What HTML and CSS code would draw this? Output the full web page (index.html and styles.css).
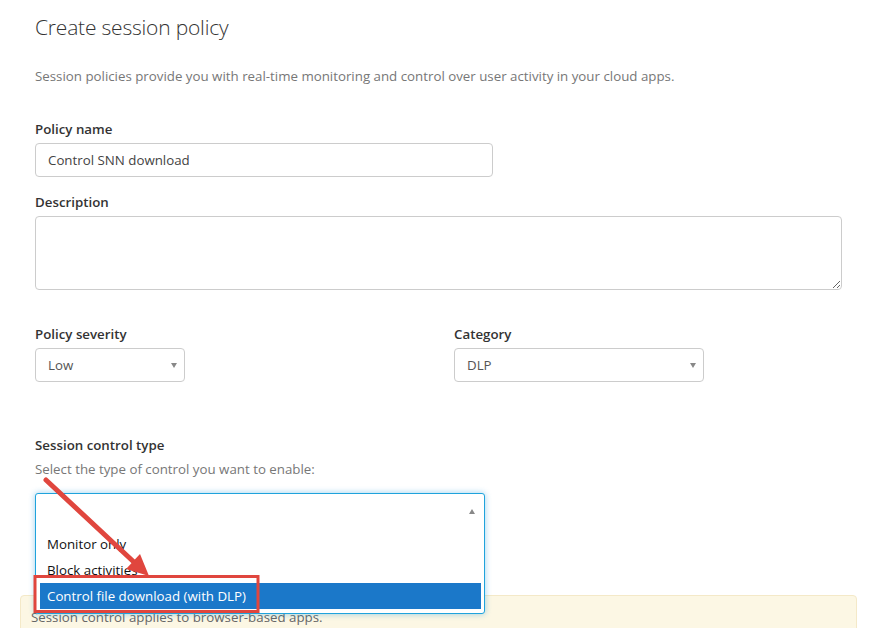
FILE: index.html
```html
<!DOCTYPE html>
<html>
<head>
<meta charset="utf-8">
<link rel="stylesheet" href="styles.css">
</head>
<body>
<div class="page">
  <div class="form">
    <h1 class="title">Create session policy</h1>
    <p class="intro">Session policies provide you with real-time monitoring and control over user activity in your cloud apps.</p>

    <div class="group">
      <label class="label">Policy name</label>
      <div class="input">Control SNN download</div>
    </div>

    <div class="group">
      <label class="label">Description</label>
      <textarea class="textarea"></textarea>
    </div>

    <div class="row">
      <div class="col">
        <label class="label">Policy severity</label>
        <div class="select sel-sev"><span>Low</span><i class="caret"></i></div>
      </div>
      <div class="col">
        <label class="label">Category</label>
        <div class="select sel-cat"><span>DLP</span><i class="caret"></i></div>
      </div>
    </div>

    <div class="group control">
      <label class="label">Session control type</label>
      <p class="hint">Select the type of control you want to enable:</p>
      <div class="combo">
        <div class="combo-open">
          <div class="combo-head"><i class="caret-up"></i></div>
          <ul class="options">
            <li>Monitor only</li>
            <li>Block activities</li>
            <li class="active">Control file download (with DLP)</li>
          </ul>
        </div>
      </div>
    </div>
  </div>

  <div class="alert">Session control applies to browser-based apps.</div>
</div>

<svg class="annot" width="870" height="628" viewBox="0 0 870 628">
  <line x1="46" y1="480" x2="136" y2="564" stroke="#e0463e" stroke-width="5" stroke-linecap="round"/>
  <polygon points="149,576 126,569 140,554" fill="#e0463e"/>
  <rect x="35" y="576.5" width="223" height="35" fill="none" stroke="#e0463e" stroke-width="3"/>
</svg>
</body>
</html>
```

FILE: styles.css
```css
* { box-sizing: border-box; }
html, body { margin: 0; padding: 0; background: #fff; }
body {
  font-family: "Open Sans", "Noto Sans", "Liberation Sans", sans-serif;
  font-size: 13.3px;
  color: #333;
  overflow: hidden;
  width: 870px;
  height: 628px;
  position: relative;
}
.page { padding: 0 13px 0 20px; }
.form { padding: 0 15px; }
.title {
  margin: 0;
  padding-top: 13px;
  font-size: 21px;
  font-weight: 300;
  color: #333;
  line-height: 28px;
  letter-spacing: -0.2px;
}
.intro {
  margin: 26px 0 0;
  color: #777;
  line-height: 18px;
}
.group { margin-top: 35px; }
.group + .group { margin-top: 16px; }
.label {
  display: block;
  font-weight: 600;
  line-height: 18px;
  color: #333;
}
.input {
  margin-top: 5px;
  width: 458px;
  height: 34px;
  border: 1px solid #ccc;
  border-radius: 4px;
  padding: 0 12px;
  line-height: 32px;
  color: #444;
}
.textarea {
  display: block;
  margin: 5px 0 0;
  width: 100%;
  height: 74px;
  border: 1px solid #ccc;
  border-radius: 4px;
  font: inherit;
  resize: vertical;
}
.row { display: flex; margin-top: 35px; }
.col { width: 419px; }
.col:first-child { width: 419px; flex: 0 0 419px; }
.select {
  margin-top: 5px;
  height: 34px;
  border: 1px solid #ccc;
  border-radius: 4px;
  padding: 0 12px;
  line-height: 32px;
  color: #555;
  display: flex;
  justify-content: space-between;
  align-items: center;
}
.sel-sev { width: 150px; }
.sel-cat { width: 250px; }
.caret {
  width: 0; height: 0;
  border-left: 3px solid transparent;
  border-right: 3px solid transparent;
  border-top: 5px solid #888;
  margin-right: -5px;
}
.control { margin-top: 54px; }
.hint {
  margin: 6px 0 0;
  color: #777;
  line-height: 18px;
}
.combo {
  position: relative;
  margin-top: 15px;
  width: 450px;
  height: 34px;
}
.combo-open {
  position: absolute;
  left: 0; top: 0;
  width: 450px;
  height: 121px;
  border: 1px solid #1fa3dc;
  border-radius: 3px;
  background: #fff;
  box-shadow: 0 0 6px rgba(30, 150, 220, 0.45);
  z-index: 2;
  padding: 0 3px 0 4px;
}
.combo-head {
  height: 34px;
  display: flex;
  justify-content: flex-end;
  align-items: center;
  padding-right: 6px;
}
.caret-up {
  width: 0; height: 0;
  border-left: 3px solid transparent;
  border-right: 3px solid transparent;
  border-bottom: 5px solid #888;
}
.options {
  list-style: none;
  margin: 3px 0 0;
  padding: 0;
}
.options li {
  height: 26px;
  line-height: 26px;
  padding-left: 7px;
  color: #111;
}
.options li.active {
  background: #1b78c9;
  color: #fff;
}
.alert {
  margin-top: 68px;
  height: 60px;
  background: #fcf7e4;
  border: 1px solid #f4e9c8;
  border-radius: 4px;
  padding: 9px 10px;
  color: #666;
  line-height: 24px;
}
.annot {
  position: absolute;
  left: 0; top: 0;
  pointer-events: none;
  z-index: 5;
}
```
